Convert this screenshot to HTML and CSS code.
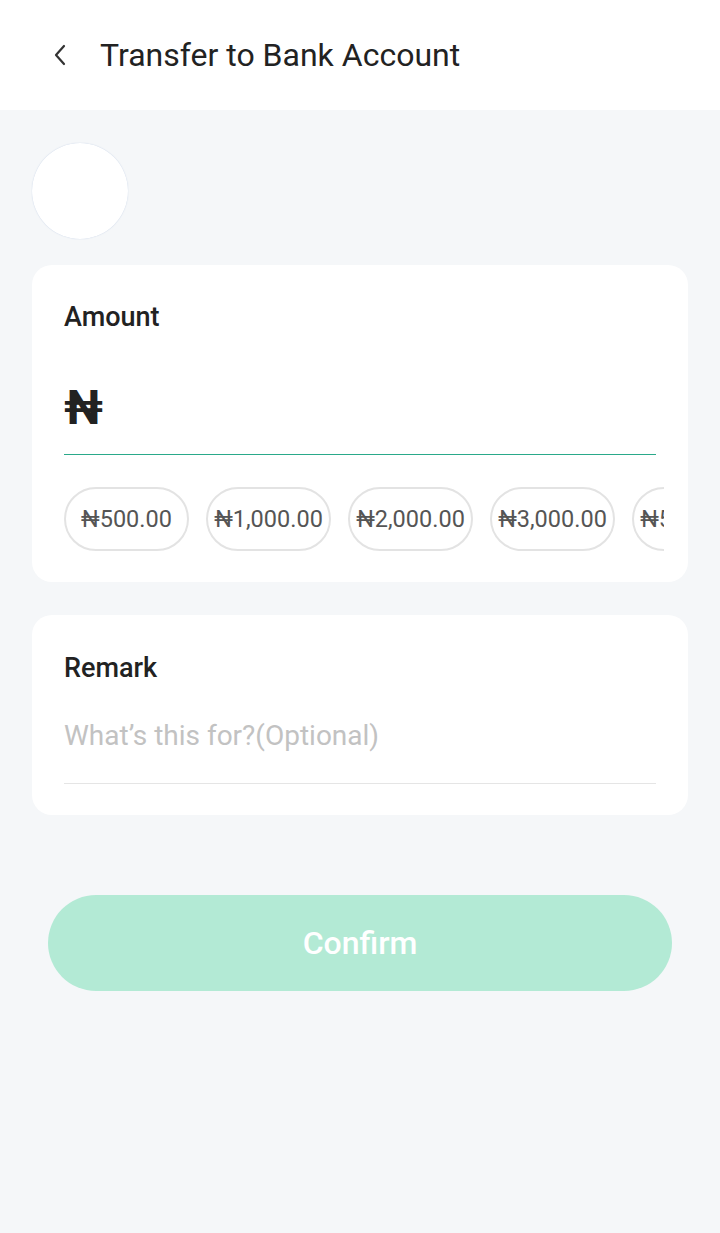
FILE: index.html
```html
<!DOCTYPE html>
<html>
<head>
<meta charset="utf-8">
<link rel="stylesheet" href="styles.css">
</head>
<body>
<header class="topbar">
  <span class="back">
    <svg width="14" height="22" viewBox="0 0 14 22"><path d="M11 2 L3 11 L11 20" fill="none" stroke="#333" stroke-width="2.2" stroke-linecap="round" stroke-linejoin="round"/></svg>
  </span>
  <h1 class="title">Transfer to Bank Account</h1>
</header>
<main class="content">
  <div class="avatar"></div>
  <section class="card amount-card">
    <div class="label">Amount</div>
    <div class="amount-input">
      <span class="naira">₦</span>
    </div>
    <div class="chips-wrap">
      <div class="chips">
        <span class="chip">₦500.00</span>
        <span class="chip">₦1,000.00</span>
        <span class="chip">₦2,000.00</span>
        <span class="chip">₦3,000.00</span>
        <span class="chip">₦5,000.00</span>
      </div>
    </div>
  </section>
  <section class="card remark-card">
    <div class="label">Remark</div>
    <div class="remark-input">What’s this for?(Optional)</div>
  </section>
  <div class="btn-wrap">
    <button class="confirm">Confirm</button>
  </div>
</main>
</body>
</html>
```
FILE: styles.css
```css
* { box-sizing: border-box; }
html, body { margin: 0; padding: 0; }
body {
  background: #f5f7f9;
  font-family: Roboto, "Noto Sans", "DejaVu Sans", sans-serif;
  color: #222;
  width: 720px;
  min-height: 1233px;
}
.topbar {
  height: 110px;
  background: #fff;
  display: flex;
  align-items: center;
  padding-left: 53px;
}
.back { display: flex; width: 47px; }
.title {
  margin: 0;
  font-size: 32px;
  font-weight: 400;
  color: #222;
  letter-spacing: 0;
}
.content {
  padding: 33px 32px 0;
}
.avatar {
  width: 96px;
  height: 96px;
  border-radius: 50%;
  background: #fff;
  box-shadow: 0 0 1px rgba(120,150,200,0.5);
}
.card {
  background: #fff;
  border-radius: 20px;
  padding: 0 32px;
}
.amount-card {
  margin-top: 26px;
  padding-top: 36px;
  padding-bottom: 31px;
}
.label {
  font-size: 27px;
  font-weight: 500;
  color: #222;
  line-height: 32px;
}
.amount-input {
  height: 122px;
  border-bottom: 1px solid #2aa98a;
  display: flex;
  align-items: center;
  padding-top: 28px;
}
.naira {
  font-size: 48px;
  font-weight: 700;
  color: #222;
  font-family: Roboto, "DejaVu Sans", sans-serif;
}
.chips-wrap {
  margin-top: 32px;
  margin-right: -8px;
  overflow: hidden;
}
.chips {
  display: flex;
  gap: 17px;
  white-space: nowrap;
}
.chip {
  flex: none;
  width: 125px;
  height: 64px;
  border: 2px solid #e3e3e3;
  border-radius: 32px;
  display: flex;
  align-items: center;
  justify-content: center;
  font-size: 23.5px;
  color: #555;
  overflow: hidden;
}
.remark-card {
  margin-top: 33px;
  padding-top: 37px;
  padding-bottom: 31px;
}
.remark-input {
  margin-top: 32px;
  height: 68px;
  font-size: 28px;
  color: #c2c2c2;
  line-height: 40px;
  border-bottom: 1px solid #e5e5e5;
}
.btn-wrap {
  padding: 80px 16px 0;
}
.confirm {
  width: 100%;
  height: 96px;
  border: none;
  border-radius: 48px;
  background: #b3ead5;
  color: #fff;
  font-family: Roboto, sans-serif;
  font-size: 32px;
  font-weight: 500;
}
```
